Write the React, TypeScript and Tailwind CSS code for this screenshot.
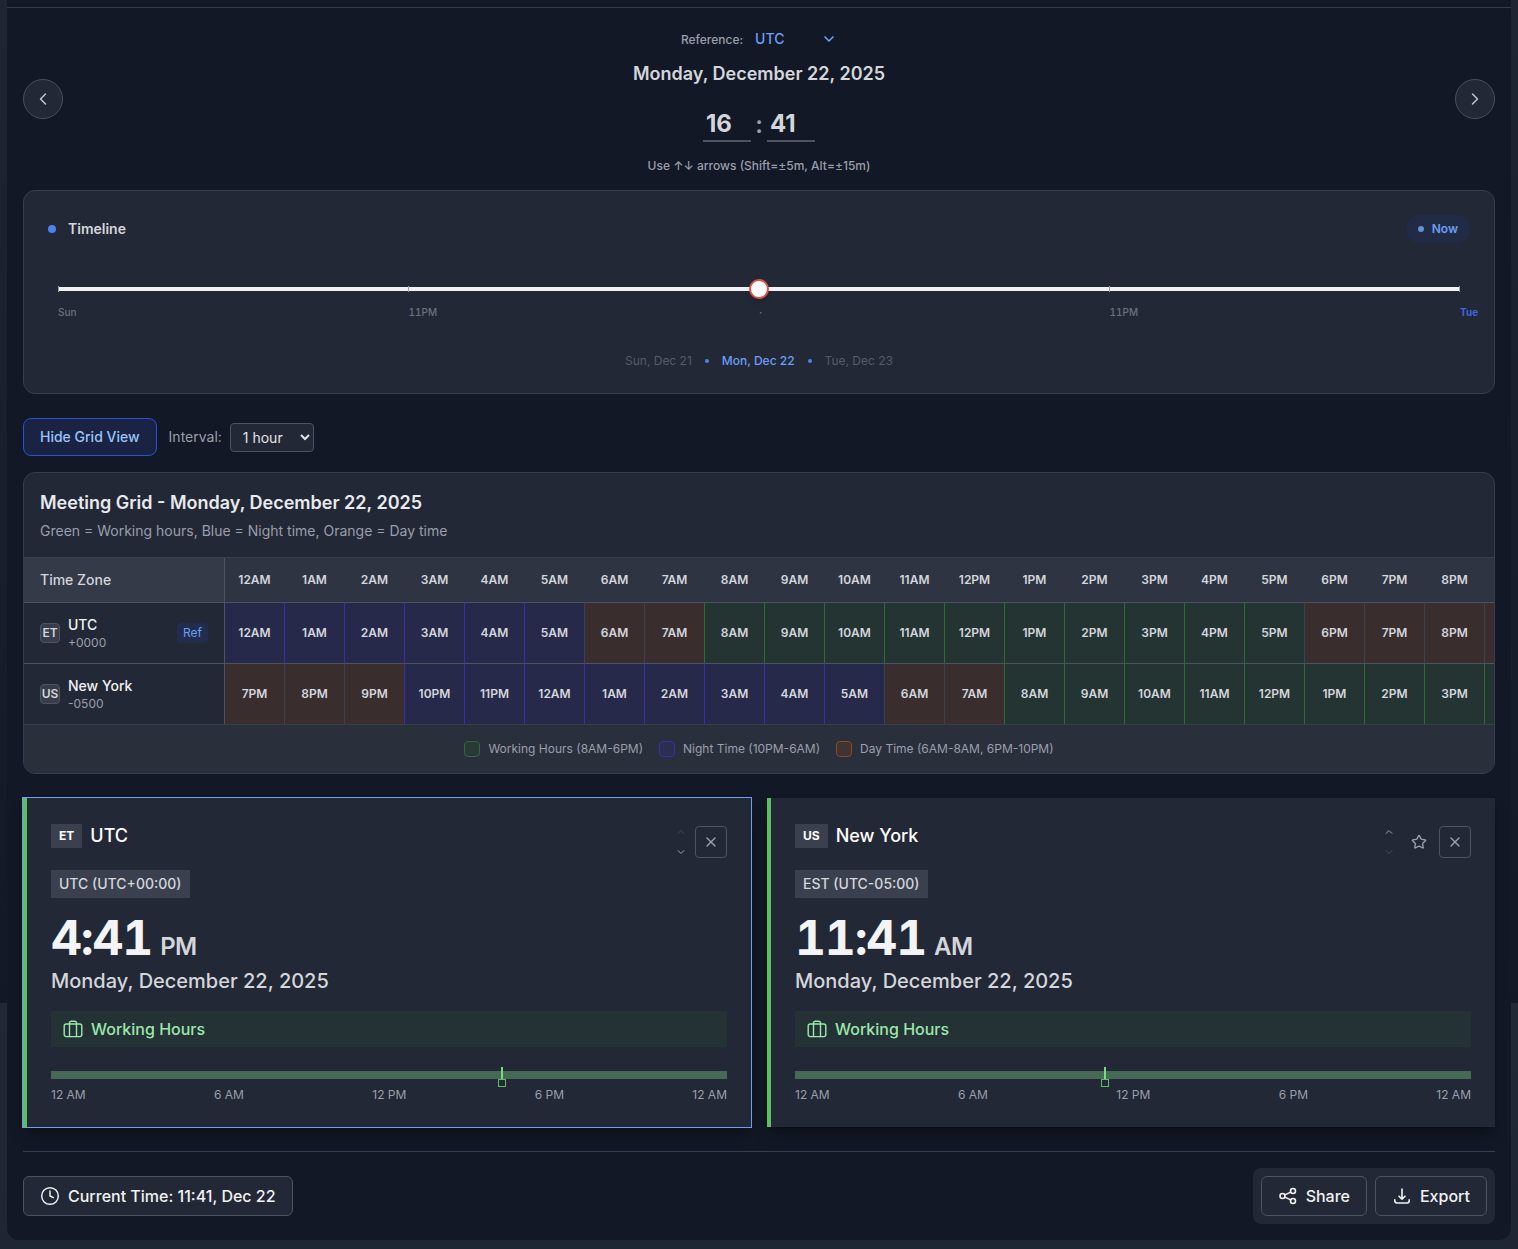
import { useState } from 'react'
import { ChevronDown, ChevronLeft, ChevronRight, ChevronUp, Clock, Star, X } from 'lucide-react'

type Period = 'work' | 'night' | 'day'

interface Zone {
  id: string
  code: string
  name: string
  offset: number
  offsetLabel: string
  badge: string
  isRef: boolean
  time: string
  meridiem: string
  hour: number
}

const DATE = 'Monday, December 22, 2025'

const zones: Zone[] = [
  { id: 'utc', code: 'ET', name: 'UTC', offset: 0, offsetLabel: '+0000', badge: 'UTC (UTC+00:00)', isRef: true, time: '4:41', meridiem: 'PM', hour: 16 },
  { id: 'ny', code: 'US', name: 'New York', offset: -5, offsetLabel: '-0500', badge: 'EST (UTC-05:00)', isRef: false, time: '11:41', meridiem: 'AM', hour: 11 },
]

const hours = Array.from({ length: 24 }, (_, i) => i)

const periodClass: Record<Period, string> = {
  work: 'bg-[#243433] border-l-[#2f6a38]',
  night: 'bg-[#26294a] border-l-[#3830a3]',
  day: 'bg-[#3a2d2e] border-l-[#3a4356]',
}

const legend = [
  { label: 'Working Hours (8AM-6PM)', box: 'bg-[#283a38] border-[#2f6a38]' },
  { label: 'Night Time (10PM-6AM)', box: 'bg-[#2b2e50] border-[#3830a3]' },
  { label: 'Day Time (6AM-8AM, 6PM-10PM)', box: 'bg-[#3f3434] border-[#8a4a20]' },
]

function formatHour(h: number) {
  return `${h % 12 === 0 ? 12 : h % 12}${h < 12 ? 'AM' : 'PM'}`
}

function getPeriod(h: number): Period {
  if (h >= 8 && h < 18) return 'work'
  if (h >= 22 || h < 6) return 'night'
  return 'day'
}

function LuggageIcon() {
  return (
    <svg width="20" height="20" viewBox="0 0 20 20" fill="none" stroke="currentColor" strokeWidth="1.4" strokeLinecap="round" strokeLinejoin="round">
      <rect x="1.2" y="5" width="17.6" height="12.6" rx="2" />
      <path d="M6.5 17.5V4a1.8 1.8 0 0 1 1.8-1.8h3.4A1.8 1.8 0 0 1 13.5 4v13.5" />
    </svg>
  )
}

function ShareIcon() {
  return (
    <svg width="20" height="20" viewBox="0 0 20 20" fill="none" stroke="currentColor" strokeWidth="1.6" strokeLinecap="round">
      <circle cx="4.5" cy="10" r="2.5" />
      <circle cx="15" cy="5" r="2.5" />
      <circle cx="15" cy="15" r="2.5" />
      <path d="M6.8 8.9l5.9-2.8M6.8 11.1l5.9 2.8" />
    </svg>
  )
}

function ExportIcon() {
  return (
    <svg width="20" height="20" viewBox="0 0 20 20" fill="none" stroke="currentColor" strokeWidth="1.6" strokeLinecap="round" strokeLinejoin="round">
      <path d="M10 3v10M7 10.2l3 3 3-3" />
      <path d="M2.8 13.8v1a2.2 2.2 0 0 0 2.2 2.2h10a2.2 2.2 0 0 0 2.2-2.2v-1" />
    </svg>
  )
}

function ReferenceHeader() {
  const [hour, setHour] = useState('16')
  const [minute, setMinute] = useState('41')
  const navClass = 'flex size-10 items-center justify-center rounded-full border border-[#4a515e] bg-[#222835] text-[#c3c7cf]'
  const timeClass = 'h-9 w-12 border-b-2 border-[#4d5360] bg-transparent px-[3px] text-2xl font-bold text-[#d3d6db] outline-none'

  return (
    <section className="flex items-center justify-between border-t border-[#373e4b] px-4 py-4">
      <button type="button" aria-label="Previous day" className={navClass}><ChevronLeft size={20} strokeWidth={1.75} /></button>
      <div className="flex flex-col items-center">
        <div className="mb-1.5 flex h-[30px] items-center gap-2">
          <label htmlFor="reference" className="pt-0.5 text-xs font-medium text-[#9a9fab]">Reference:</label>
          <div className="relative">
            <select id="reference" className="block h-5 w-[86px] appearance-none bg-transparent pl-1 text-sm font-medium text-[#6a9ff5] outline-none">
              <option>UTC</option>
              <option>New York</option>
            </select>
            <ChevronDown size={16} strokeWidth={2.5} className="pointer-events-none absolute top-0.5 right-0 text-[#6a9ff5]" />
          </div>
        </div>
        <h1 className="text-lg font-semibold text-[#d3d6db]">{DATE}</h1>
        <div className="mt-[18px] flex items-center">
          <input aria-label="Hour" value={hour} onChange={e => setHour(e.target.value)} className={timeClass} />
          <span className="w-4 pt-0.5 text-center text-2xl font-semibold text-[#9a9fab]">:</span>
          <input aria-label="Minute" value={minute} onChange={e => setMinute(e.target.value)} className={timeClass} />
        </div>
        <p className="mt-4 text-xs font-medium text-[#9a9fab]">Use ↑↓ arrows (Shift=±5m, Alt=±15m)</p>
      </div>
      <button type="button" aria-label="Next day" className={navClass}><ChevronRight size={20} strokeWidth={1.75} /></button>
    </section>
  )
}

function Timeline() {
  const [value, setValue] = useState(50)

  return (
    <section className="rounded-xl border border-[#373e4b] bg-[#222835] p-6">
      <div className="flex items-center justify-between">
        <div className="flex items-center gap-3">
          <span className="size-2 rounded-full bg-[#4d82ee]" />
          <h2 className="text-sm font-semibold text-[#d3d6db]">Timeline</h2>
        </div>
        <button type="button" className="flex items-center gap-2 rounded-full bg-[#212b46] px-3 py-1.5 text-xs font-semibold text-[#6a9ff5]">
          <span className="size-1.5 rounded-full bg-[#6590d8]" />
          Now
        </button>
      </div>
      <div className="px-2.5">
        <div className="relative mt-9 h-5">
          <input
            type="range"
            aria-label="Time"
            min={0}
            max={100}
            value={value}
            onChange={e => setValue(Number(e.target.value))}
            className="block h-5 w-full appearance-none bg-transparent [&::-webkit-slider-runnable-track]:h-1 [&::-webkit-slider-runnable-track]:bg-[#f0f2f4] [&::-webkit-slider-thumb]:-mt-2 [&::-webkit-slider-thumb]:size-5 [&::-webkit-slider-thumb]:appearance-none [&::-webkit-slider-thumb]:rounded-full [&::-webkit-slider-thumb]:border-2 [&::-webkit-slider-thumb]:border-[#d9534a] [&::-webkit-slider-thumb]:bg-white [&::-webkit-slider-thumb]:shadow-md"
          />
          <div className="pointer-events-none absolute inset-x-0 top-[7px] flex h-1.5 justify-between">
            <span className="w-px bg-[#9a9fab]" />
            <span className="w-px bg-[#9a9fab]" />
            <span className="w-px" />
            <span className="w-px bg-[#9a9fab]" />
            <span className="w-px bg-[#9a9fab]" />
          </div>
        </div>
        <div className="mt-1 flex text-[10px] leading-[18px] font-medium text-[#6b7280] tabular-nums">
          <span className="flex-1">Sun</span>
          <span className="flex-1">11PM</span>
          <span className="flex-1 font-bold">·</span>
          <span className="flex-1">11PM</span>
          <span className="w-0 font-bold whitespace-nowrap text-[#3b66dd]">Tue</span>
        </div>
      </div>
      <div className="mt-8 flex items-center justify-center gap-[13px] text-xs text-[#565c69]">
        <span>Sun, Dec 21</span>
        <span className="size-1 rounded-full bg-[#4d82ee]" />
        <span className="font-medium text-[#6a9ff5]">Mon, Dec 22</span>
        <span className="size-1 rounded-full bg-[#4d82ee]" />
        <span>Tue, Dec 23</span>
      </div>
    </section>
  )
}

function GridControls() {
  return (
    <div className="mt-6 flex items-center gap-3">
      <button type="button" className="rounded-lg border border-[#2a51d8] bg-[#1a2344] px-4 py-2 text-sm font-medium text-[#9cc3f8]">
        Hide Grid View
      </button>
      <div className="flex items-center gap-2">
        <label htmlFor="interval" className="text-sm text-[#9a9fab]">Interval:</label>
        <select id="interval" className="h-[29px] w-[84px] rounded border border-[#4d5360] bg-[#222835] px-2 text-sm text-[#e2e4e8]">
          <option>1 hour</option>
          <option>30 min</option>
          <option>15 min</option>
        </select>
      </div>
    </div>
  )
}

function MeetingGrid() {
  return (
    <section className="mt-4 overflow-hidden rounded-xl border border-[#373e4b] bg-[#222835]">
      <div className="border-b border-[#373e4b] p-4">
        <h2 className="text-lg font-semibold text-[#e8eaed]">Meeting Grid - {DATE}</h2>
        <p className="mt-1 text-sm text-[#9a9fab]">Green = Working hours, Blue = Night time, Orange = Day time</p>
      </div>
      <div className="overflow-x-auto [scrollbar-width:none]">
        <table className="w-[1640px] table-fixed border-separate border-spacing-0">
          <thead>
            <tr>
              <th className="h-11 w-[200px] bg-[#343a47] px-4 text-left text-sm font-medium text-[#d3d6db]">Time Zone</th>
              {hours.map(h => (
                <th key={h} className="w-[60px] border-l border-l-[#2e3441] bg-[#2e3441] text-center text-xs font-semibold text-[#d3d6db] nth-2:border-l-[#4d5360]">
                  {formatHour(h)}
                </th>
              ))}
            </tr>
          </thead>
          <tbody>
            {zones.map(zone => (
              <tr key={zone.id}>
                <th className="h-[61px] border-t border-t-[#4d5360] px-4 text-left font-normal">
                  <div className="flex items-center gap-2">
                    <span className="flex size-5 items-center justify-center rounded border border-[#4d5360] bg-[#373d4a] text-xs font-semibold text-[#d3d6db]">{zone.code}</span>
                    <div className="flex-1">
                      <div className="text-sm font-medium text-[#f1f2f4]">{zone.name}</div>
                      <div className="text-xs leading-4 text-[#9a9fab]">{zone.offsetLabel}</div>
                    </div>
                    {zone.isRef && (
                      <span className="rounded bg-[#212d4d] px-1.5 py-0.5 text-xs text-[#6a9ff5]">Ref</span>
                    )}
                  </div>
                </th>
                {hours.map(h => {
                  const local = (h + zone.offset + 24) % 24
                  return (
                    <td key={h} className={`border-t border-l border-t-[#4d5360] text-center text-xs font-semibold text-[#d3d6db] nth-2:border-l-[#4d5360] ${periodClass[getPeriod(local)]}`}>
                      {formatHour(local)}
                    </td>
                  )
                })}
              </tr>
            ))}
          </tbody>
        </table>
      </div>
      <div className="flex items-center justify-center gap-4 border-t border-[#373e4b] bg-[#2a2f3c] py-4">
        {legend.map(item => (
          <div key={item.label} className="flex items-center gap-2 text-xs text-[#9a9fab]">
            <span className={`size-4 rounded border ${item.box}`} />
            {item.label}
          </div>
        ))}
      </div>
    </section>
  )
}

function ZoneCard({ zone }: { zone: Zone }) {
  return (
    <article className={`min-w-0 flex-1 border-l-4 border-[#5cbf60] bg-[#222835] p-6 shadow-lg shadow-black/30 ${zone.isRef ? 'ring-1 ring-[#6a9ff5]' : ''}`}>
      <div className="flex items-start justify-between">
        <div className="flex items-center gap-2">
          <span className="bg-[#3a404e] px-2 py-1 text-xs font-bold text-white">{zone.code}</span>
          <h3 className="text-lg font-medium text-white">{zone.name}</h3>
        </div>
        <div className="flex h-10 items-center gap-2">
          <div className="flex flex-col text-[#9a9fab]">
            <button type="button" aria-label="Move up" disabled={zone.isRef} className="flex h-5 w-3 items-center justify-center disabled:opacity-30"><ChevronUp size={12} /></button>
            <button type="button" aria-label="Move down" disabled={!zone.isRef} className="flex h-5 w-3 items-center justify-center disabled:opacity-30"><ChevronDown size={12} /></button>
          </div>
          <div className="flex gap-1">
            {!zone.isRef && (
              <button type="button" aria-label="Set as reference" className="flex size-8 items-center justify-center text-[#9a9fab]"><Star size={16} /></button>
            )}
            <button type="button" aria-label={`Remove ${zone.name}`} className="flex size-8 items-center justify-center rounded border border-[#4d5360] text-[#9a9fab]"><X size={16} /></button>
          </div>
        </div>
      </div>
      <div className="mt-2 flex">
        <span className="bg-[#3a404e] px-2 py-1 text-sm font-medium text-[#d3d6db]">{zone.badge}</span>
      </div>
      <div className="mt-3 flex items-baseline gap-2">
        <span className="text-5xl leading-[56px] font-bold tracking-tight text-[#f3f4f6] tabular-nums">{zone.time}</span>
        <span className="text-2xl leading-8 font-semibold tracking-tight text-[#d3d6db]">{zone.meridiem}</span>
      </div>
      <p className="mt-px text-xl font-medium text-[#d3d6db]">{DATE}</p>
      <div className="mt-4 flex h-9 items-center gap-2 bg-[#243135] px-3 font-medium text-[#9be8ab]">
        <LuggageIcon />
        Working Hours
      </div>
      <div className="relative mt-6 h-2 bg-[#456a55]">
        <div className="absolute -top-1 flex w-2 -translate-x-1/2 flex-col items-center" style={{ left: `${(zone.hour / 24) * 100}%` }}>
          <span className="h-3 w-0.5 bg-[#7ad985]" />
          <span className="size-2 border border-[#5cbf60] bg-[#222835]" />
        </div>
      </div>
      <div className="mt-2 flex justify-between text-xs text-[#9a9fab]">
        <span>12 AM</span>
        <span>6 AM</span>
        <span>12 PM</span>
        <span>6 PM</span>
        <span>12 AM</span>
      </div>
    </article>
  )
}

function Footer() {
  const buttonClass = 'flex h-10 items-center gap-2 rounded-md border border-[#4d5360] bg-[#222835] px-4 font-medium text-[#f1f2f4]'

  return (
    <footer className="mt-6 flex items-center justify-between border-t border-[#373e4b] pt-4">
      <button type="button" className={buttonClass}><Clock size={20} strokeWidth={1.75} />Current Time: 11:41, Dec 22</button>
      <div className="flex gap-2 rounded-lg bg-[#222835] p-2">
        <button type="button" className={buttonClass}><ShareIcon />Share</button>
        <button type="button" className={buttonClass}><ExportIcon />Export</button>
      </div>
    </footer>
  )
}

export default function App() {
  return (
    <div className="min-h-screen bg-[linear-gradient(to_bottom,#222936,#121825)] bg-[length:100%_1249px] bg-[position:0_-246px] px-[7px] pb-[9px] font-['Inter',sans-serif]">
      <main className="rounded-b-xl bg-[#121825] pt-[7px] pb-4">
        <ReferenceHeader />
        <div className="px-4">
          <Timeline />
          <GridControls />
          <MeetingGrid />
          <div className="mt-6 flex gap-4">
            {zones.map(zone => <ZoneCard key={zone.id} zone={zone} />)}
          </div>
          <Footer />
        </div>
      </main>
    </div>
  )
}
